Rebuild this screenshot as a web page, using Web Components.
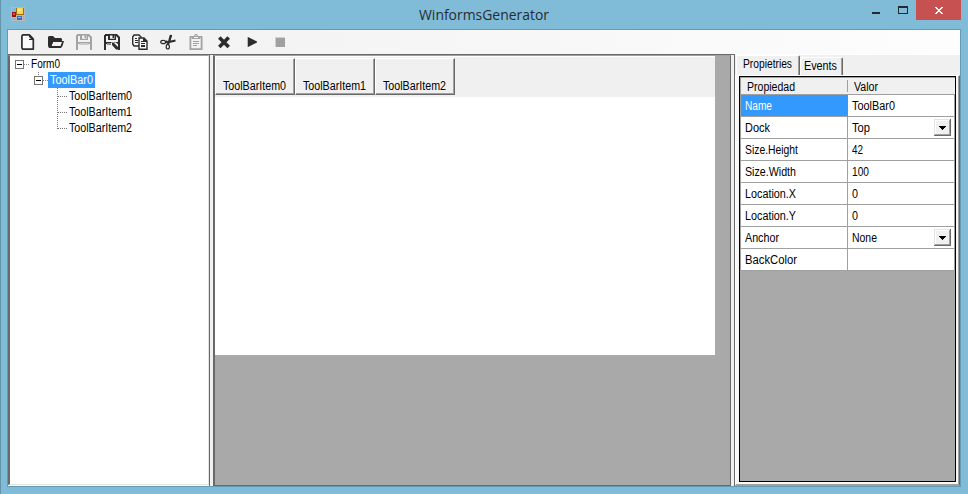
<!DOCTYPE html>
<html lang="es"><head><meta charset="utf-8"><title>WinformsGenerator</title>
<style>html,body{margin:0;width:968px;height:494px;overflow:hidden;font-family:"Liberation Sans",Arial,sans-serif}</style></head>
<body><app-window></app-window>
<script>
const define=(name,html,setup)=>customElements.define(name,class extends HTMLElement{
  connectedCallback(){
    if(this.shadowRoot)return;
    const t=document.createElement('template');
    t.innerHTML=typeof html==='function'?html(this):html;
    this.attachShadow({mode:'open'}).append(t.content.cloneNode(true));
    if(setup)setup(this);
  }
});

/* One line of interface text, condensed to the width "w". */
define('ui-label',e=>{
  const w=e.getAttribute('w'),s=e.getAttribute('size')||12,h=+(e.getAttribute('h')||16),f=e.getAttribute('face')||'Liberation Sans';
  return `<style>:host{display:block;flex:none;width:${w}px;height:${h}px}svg{display:block;overflow:visible}text{font:${s}px "${f}",sans-serif;fill:currentColor}</style>
  <svg width="${w}" height="${h}"><text y="${e.getAttribute('base')||12}" textLength="${w}" lengthAdjust="spacingAndGlyphs">${e.getAttribute('text')}</text></svg>`});

const D='#2d2d2d',G='#a3a3a3';
const floppy=c=>`<path fill="${c}" fill-rule="evenodd" d="M0 1h1V0h12l1 1 2 2v13h-2v-6H2v6H0zM2 2v6h12V4l-2-2v4H4V2zM6 1.500v3.200h4.500V1.500zM3 9.500h10v1H3z"/><path fill="${c}" d="M8.500 1h1.500v3H8.500z"/>`;
const icons={
 new:`<path fill="#fafafa" stroke="${D}" stroke-width="1.700" stroke-linejoin="round" d="M2.800 .9h6.500l4 4.300v9.900H2.800L1.900 14V2z"/><path fill="${D}" d="M9 1h1l3 3v2H9z"/><path fill="#fafafa" d="M9 3l2 2H9z"/>`,
 open:`<path fill="${D}" d="M0 3l1-1h4l2 2h6l1 1v2h2l-1.500 5L13 14H1L0 12z"/><path fill="#f3f3f3" d="M5 8h9l-1.500 4H3.500z"/><path fill="${D}" d="M4 8l-2 5h1l2-5z"/>`,
 save:floppy(G),
 saveas:floppy(D)+`<path fill="#f3f3f3" d="M7 8.500h5l2 2V16H7z"/><path fill="${D}" d="M8 9h2l4 4v2.500h-2L8 11z"/>`,
 copy:`<path fill="#f5f5f5" stroke="${D}" stroke-width="1.400" d="M2 1h5l2 2v9H2L.7 10V3z"/><path fill="${D}" d="M3 4h2v1H3zM3 6h3v1H3zM3 8h3v1H3z"/><path fill="#f5f5f5" stroke="${D}" stroke-width="1.400" d="M7 4h5l3 3v8.200H7z"/><path fill="${D}" d="M11 4h1l3 3v1h-4zM9 7h2v1H9zM9 9h4v1H9zM9 11h4v2H9z"/>`,
 cut:`<path d="M9 8L11 1M7 8.500L15.500 6.500M6 7L9 10" stroke="${D}" stroke-width="2.300" fill="none"/><path d="M9.500 5L11.500 1" stroke="${D}" stroke-width="1.500"/><ellipse cx="3.200" cy="8" rx="2.500" ry="1.700" fill="none" stroke="${D}" stroke-width="1.200"/><ellipse cx="7.800" cy="12.700" rx="1.600" ry="2.300" fill="none" stroke="${D}" stroke-width="1.200"/>`,
 paste:`<path fill="none" stroke="${G}" stroke-width="1.800" d="M2.400 2.900h11.200v12.200H2.400z"/><path fill="${G}" d="M4 2h2l1-2h2l1 2h2v3H4zM5 7h6v1H5zM5 9h6v1H5zM5 11h4v1H5z"/><path fill="#f5f5f5" d="M6 3h4v1H6zM7.500 1h1v1h-1z"/>`,
 delete:`<path stroke="${D}" stroke-width="3.600" d="M3.300 3.500l9.400 9.400M12.700 3.500l-9.400 9.400"/>`,
 run:`<path fill="${D}" d="M3 3h1l9 4.500v1L4 13H3z"/><path fill="#bbb" d="M3 3h1v10H3z"/>`,
 stop:`<path fill="#a0a0a0" d="M3 3h10v10H3z"/><path fill="#cfcfcf" d="M3 3h10v1H4v9H3z"/>`};
define('tool-icon',e=>`<style>:host{display:block;width:16px;height:16px;flex:none}svg{display:block;overflow:visible}</style><svg width="16" height="16" viewBox="0 0 16 16">${icons[e.getAttribute('name')]}</svg>`);
define('tool-strip',`<style>:host{display:flex;height:24px;box-sizing:border-box;padding:4px 0 0 12px;gap:12px;background:linear-gradient(90deg,#f0f0f0,#fdfdfd)}</style>`+Object.keys(icons).map(n=>`<tool-icon name="${n}"></tool-icon>`).join(''));

define('title-bar',`<style>
:host{display:grid;grid-template-columns:419px 1fr auto;height:29px;color:#272c33}
.app{display:block;margin:7px 0 0 11px}.title{padding-top:5px}
.buttons{display:block}</style>
<svg class="app" width="14" height="14" shape-rendering="crispEdges"><path fill="#b7b9ba" d="M0 0h14v14H0z"/><path fill="#80bbd8" d="M1 1h4v4H1zM1 11h4v2H1zM12 9h1v4h-1z"/><path fill="#a16c10" d="M5 1h8v7H5z"/><path fill="#f8d750" d="M6 1h6v6H6z"/><path fill="#fff09a" d="M7 2h3v2H7z"/><path fill="#a40f0f" d="M1 5h4v5H1z"/><path fill="#e34b42" d="M2 6h2v2H2z"/><path fill="#356bc1" d="M6 9h5v4H6z"/><path fill="#8bb8ff" d="M7 10h3v1H7z"/></svg>
<div class="title"><ui-label text="WinformsGenerator" w="130" h="20" size="15" base="15" face="Open Sans"></ui-label></div>
<svg class="buttons" width="104" height="29" shape-rendering="crispEdges"><path fill="#252a2d" d="M8 12h8v2H8z"/><path fill="none" stroke="#252a2d" d="M34.500 6.500h9v7h-9z"/><path fill="#252a2d" d="M34 6h10v2H34z"/><path fill="#c75050" d="M52 0h45v20H52z"/><path fill="#fff" d="M71 7h2v1h1v1h2V8h1V7h2v1h-1v1h-1v1h-1v1h1v1h1v1h1v1h-2v-1h-1v-1h-2v1h-1v1h-2v-1h1v-1h1v-1h1v-1h-1V9h-1V8h-1z"/></svg>`);

define('tree-node',e=>{
 const l=+e.getAttribute('level'),x=[5,24,47][l],w=[21,38,59][l];
 let g='';
 if(l<2)g=`<path d="M${x+9} 8.500h5" stroke="#888" stroke-dasharray="1 1"/><path fill="#fff" stroke="#757575" d="M${x+.5} 4.500h8v8h-8z"/><path fill="#000" d="M${x+2} 8h5v1h-5z"/>`;
 if(l===1)g+=`<path d="M28.500 0v4" stroke="#777" stroke-dasharray="1 1"/>`;
 if(l===2)g=`<path d="M47.500 0v${e.hasAttribute('last')?9:16}M47.500 8.500h9" stroke="#777" fill="none" stroke-dasharray="1 1"/>`;
 return `<style>:host{display:flex;height:16px}svg{display:block;flex:none}.name{padding:0 ${l===1?2:1}px 0 ${l===1?2:0}px;height:16px${l===1?';background:#3399ff;color:#fff':''}}</style><svg width="${w}" height="16" shape-rendering="crispEdges">${g}</svg><div class="name"><ui-label text="${e.getAttribute('text')}" w="${e.getAttribute('w')}"></ui-label></div>`});
define('tree-panel',`<style>:host{display:block;box-sizing:border-box;width:201px;border:solid;border-width:1px 1px 1px 2px;border-color:#a0a0a0 #e3e3e3 #e3e3e3 #696969;background:#fff;margin-bottom:1px}</style>
<tree-node level="0" text="Form0" w="29"></tree-node><tree-node level="1" text="ToolBar0" w="43"></tree-node><tree-node level="2" text="ToolBarItem0" w="63"></tree-node><tree-node level="2" text="ToolBarItem1" w="63"></tree-node><tree-node level="2" last text="ToolBarItem2" w="63"></tree-node>`);

define('bar-button',e=>`<style>:host{display:block;box-sizing:border-box;width:80px;height:37px;padding:20px 0 0 7px;background:#f0f0f0;border:solid;border-width:1px 1px 1px 1px;border-color:#fff #696969 #696969 #fff;box-shadow:inset -1px -1px #a0a0a0}</style><ui-label text="${e.getAttribute('text')}" w="63" h="13" base="11"></ui-label>`);
define('form-designer',`<style>:host{display:block;flex:1;background:#a9a9a9;border-left:2px solid #696969;border-right:1px solid #696969;border-top:1px solid #a0a0a0;border-bottom:1px solid #696969}
.form{width:500px;height:299px;background:#fff}.bar{display:flex;height:41px;box-sizing:border-box;padding-top:1px;background:#f0f0f0;border-top:1px solid #fff}</style>
<div class="form"><div class="bar"><bar-button text="ToolBarItem0"></bar-button><bar-button text="ToolBarItem1"></bar-button><bar-button text="ToolBarItem2"></bar-button></div></div>`);
define('split-bar',`<style>:host{display:block;box-sizing:border-box;width:4px;border-left:1px solid #696969;background:#f0f0f0}:host([right]){border-left:0;border-right:1px solid #696969}</style>`);

define('prop-row',e=>`<style>:host{display:grid;grid-template-columns:107px 107px;height:22px;width:214px;border-left:1px solid #a0a0a0}
div{display:flex;justify-content:space-between;box-sizing:border-box;border:solid #a0a0a0;border-width:0 1px 1px 0;padding:3px 3px 0 4px;background:#fff}
div:first-child{padding-left:2.500px}
.on{background:#3399ff;color:#fff;border-right-color:#3399ff}
.drop{display:block;margin-top:-1px}</style>
<div class="name"><ui-label text="${e.getAttribute('name')}" w="${e.getAttribute('nw')}" h="15"></ui-label></div><div>${e.getAttribute('value')?`<ui-label text="${e.getAttribute('value')}" w="${e.getAttribute('vw')}" h="15"></ui-label>`:''}${e.hasAttribute('drop')?'<svg class="drop" width="17" height="17" shape-rendering="crispEdges"><path fill="#696969" d="M0 0h17v17H0z"/><path fill="#e3e3e3" d="M0 0h16v16H0z"/><path fill="#a0a0a0" d="M1 1h15v15H1z"/><path fill="#fff" d="M1 1h14v14H1z"/><path fill="#f0f0f0" d="M2 2h13v13H2z"/><path d="M5 7h7v1h-1v1h-1v1H9v1H8v-1H7V9H6V8H5z"/></svg>':''}</div>`,
 e=>{if(e.hasAttribute('selected'))e.shadowRoot.querySelector('.name').classList.add('on')});
const rows=[['Name',27,'ToolBar0',43],['Dock',25,'Top',18,1],['Size.Height',53,'42',11],['Size.Width',51,'100',17],['Location.X',51,'0',6],['Location.Y',51,'0',6],['Anchor',34,'None',25,1],['BackColor',52,'',0]];
define('property-grid',`<style>:host{display:block;box-sizing:border-box;width:217px;height:406px;border:1px solid #000;background:#a9a9a9}
.head{display:grid;grid-template-columns:107px 107px;height:18px;box-sizing:border-box;border:solid #a0a0a0;border-width:1px 0 1px 1px;background:#f0f0f0;width:215px}
.head div{padding:2px 0 0 6px}.head div+div{padding:0 0 0 6px;border-left:1px solid #a0a0a0;margin:2px 0 2px -1px;height:12px}
</style><div class="head"><div><ui-label text="Propiedad" w="48" h="13" base="11"></ui-label></div><div><ui-label text="Valor" w="24" h="12" base="11"></ui-label></div></div>`+rows.map((r,i)=>`<prop-row name="${r[0]}" nw="${r[1]}" value="${r[2]}" vw="${r[3]}" ${r[4]?'drop':''} ${i?'':'selected'}></prop-row>`).join(''));
define('tab-panel',`<style>:host{display:flex;flex-direction:column;box-sizing:border-box;width:225px;background:#f0f0f0}
.tabs{display:flex;height:20px;flex:none;align-items:flex-end;padding-left:1px}
.tab{box-sizing:border-box;border:solid;border-width:1px 1px 0 1px;border-color:#fff #696969 #fff #fff;box-shadow:inset -1px 0 #a0a0a0;border-radius:2px 2px 0 0}
.first{width:64px;height:20px;padding:1px 0 0 6px}.second{width:43px;height:18px;padding:1px 0 0 3px}
.page{box-sizing:border-box;flex:1;border:solid;border-width:1px 1px 2px 1px;border-color:#fff #696969 #a0a0a0 #fff;box-shadow:inset -1px 0 #a0a0a0;padding:0 0 0 3px;background:#f8f8f8}</style>
<div class="tabs"><div class="tab first"><ui-label text="Propietries" w="49" h="15" base="11"></ui-label></div><div class="tab second"><ui-label text="Events" w="33" h="14" base="11"></ui-label></div></div>
<div class="page"><property-grid></property-grid></div>`);
define('app-window',`<style>:host{display:flex;flex-direction:column;box-sizing:border-box;width:968px;height:494px;background:#80bbd8;box-shadow:inset 1px 0 #6193a9}
.client{box-sizing:border-box;width:954px;height:458px;margin-left:7px;border:1px solid #639bb2;background:#fff;display:flex;flex-direction:column}
.work{display:flex;flex:1;min-height:0;background:linear-gradient(#696969,#696969) 0 0/727px 1px no-repeat;padding-top:1px}</style>
<title-bar></title-bar><div class="client"><tool-strip></tool-strip><div class="work"><tree-panel></tree-panel><split-bar></split-bar><form-designer></form-designer><split-bar right></split-bar><tab-panel></tab-panel></div></div>`);
</script></body></html>
